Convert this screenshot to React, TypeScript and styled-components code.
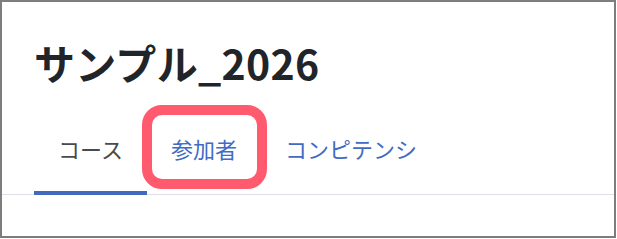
import React from "react";
import styled, {createGlobalStyle} from "styled-components";

const GlobalStyle = createGlobalStyle`
  html, body {
    margin: 0;
    padding: 0;
    background: #ffffff;
  }
  body {
    font-family: "Noto Sans CJK JP", "Noto Sans", sans-serif;
  }
`;

const Frame = styled.div`
  box-sizing: border-box;
  width: 616px;
  height: 238px;
  border: 2px solid #7d7d7d;
  background: #ffffff;
  padding-top: 36px;
  display: flex;
  flex-direction: column;
`;

const Title = styled.h1`
  margin: 0 0 20px 32px;
  font-family: "Noto Sans CJK JP", sans-serif;
  font-size: 41px;
  font-weight: 700;
  line-height: 48px;
  letter-spacing: 0.3px;
  color: #212529;
`;

const TabList = styled.div`
  display: flex;
  padding-left: 32px;
  border-bottom: 1px solid #dfdfe6;
`;

const Tab = styled.div<{ $active?: boolean }>`
  position: relative;
  padding: 27px 24px 28px;
  margin-bottom: -1px;
  border-bottom: 4px solid ${p => (p.$active ? "#4169bd" : "transparent")};
  font-family: "Noto Sans CJK JP", sans-serif;
  font-size: 22px;
  line-height: 30px;
  color: ${p => (p.$active ? "#474b50" : "#3f6bc5")};
`;

const Highlight = styled.span`
  position: absolute;
  left: -5px;
  right: -6px;
  top: -1px;
  bottom: 2px;
  border: 10px solid #ff5a6e;
  border-radius: 20px;
  pointer-events: none;
`;

export default function App() {
    return (
        <>
            <GlobalStyle/>
            <Frame>
                <Title>サンプル_2026</Title>
                <TabList>
                    <Tab $active>コース</Tab>
                    <Tab>
                        参加者
                        <Highlight/>
                    </Tab>
                    <Tab>コンピテンシ</Tab>
                </TabList>
            </Frame>
        </>
    );
}
